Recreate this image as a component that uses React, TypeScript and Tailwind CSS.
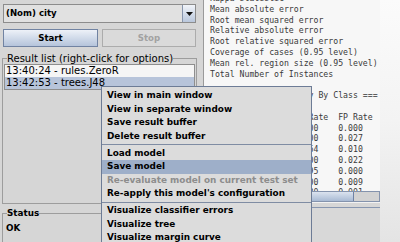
const output = [
  "Kappa statistic".padEnd(41) + "0.9544",
  "Mean absolute error".padEnd(41) + "0.0123",
  "Root mean squared error".padEnd(41) + "0.0861",
  "Relative absolute error".padEnd(41) + "5.5912 %",
  "Root relative squared error".padEnd(41) + "25.4501 %",
  "Coverage of cases (0.95 level)".padEnd(41) + "98.2143 %",
  "Mean rel. region size (0.95 level)".padEnd(41) + "10.8036 %",
  "Total Number of Instances".padEnd(41) + "168",
  "",
  "=== Detailed Accuracy By Class ===",
  "",
  "                 TP Rate  FP Rate  Precision  Recall   F-Measure",
  "                 1.000    0.000    1.000      1.000    1.000",
  "                 0.900    0.027    0.900      0.900    0.900",
  "                 0.864    0.010    0.950      0.864    0.905",
  "                 0.900    0.022    0.818      0.900    0.857",
  "                 0.895    0.000    1.000      0.895    0.944",
  "                 1.000    0.009    0.960      1.000    0.980",
  "                 0.880    0.001    0.990      0.880    0.932",
];

const menuItems: (string | { label: string; disabled?: boolean; active?: boolean } | null)[] = [
  "View in main window",
  "View in separate window",
  "Save result buffer",
  "Delete result buffer",
  null,
  "Load model",
  { label: "Save model", active: true },
  { label: "Re-evaluate model on current test set", disabled: true },
  "Re-apply this model's configuration",
  null,
  "Visualize classifier errors",
  "Visualize tree",
  "Visualize margin curve",
  "Visualize threshold curve",
];

export default function App() {
  return (
    <div className="relative flex h-[242px] w-[400px] overflow-hidden bg-[#d6d6d6] [font-family:'DejaVu_Sans',sans-serif] text-black">
      {/* left side: class combo, start/stop, result list, status */}
      <div className="flex w-[200px] shrink-0 flex-col pt-[4px] pl-[3px] pr-[4px]">
        <div className="flex h-[19px] shrink-0 border border-[#8c8c8c] bg-[#e1e1e1]">
          <span className="flex-1 pl-[2px] text-[8.6px] font-bold leading-[17px]">(Nom) city</span>
          <span className="flex w-[13px] items-center justify-center border-l border-[#8795ad] bg-linear-to-b from-[#f1f4f9] to-[#b9c7dc]">
            <svg width="7" height="4" viewBox="0 0 7 4">
              <path d="M0 0h7L3.5 4z" fill="#111" />
            </svg>
          </span>
        </div>

        <div className="mt-[6px] flex shrink-0 gap-[4px]">
          <button className="h-[18px] w-[95px] border border-[#7183a2] bg-linear-to-b from-[#edf1f8] to-[#b5c4db] text-[8.6px] font-bold">
            Start
          </button>
          <button className="h-[18px] flex-1 border border-[#acacac] bg-[#dadada] text-[8.6px] font-bold text-[#a2a2a2]">
            Stop
          </button>
        </div>

        <fieldset className="mt-[6px] -mx-[1px] h-[151px] shrink-0 border border-[#9d9d9d] px-[1px] pb-[1px]">
          <legend className="ml-[3px] text-[10px] leading-[11px]">Result list (right-click for options)</legend>
          <div className="h-full border border-[#8e8e8e] bg-[#f5f5f5] text-[10px]">
            <div className="h-[12px] pl-[1px] leading-[12px]">13:40:24 - rules.ZeroR</div>
            <div className="h-[12px] bg-[#b7c4da] pl-[1px] leading-[12px]">13:42:53 - trees.J48</div>
          </div>
        </fieldset>

        <fieldset className="mt-[3px] -mx-[1px] -mr-[5px] h-[40px] shrink-0 border border-[#9d9d9d] pl-[3px]">
          <legend className="ml-[1px] text-[8.8px] font-bold leading-[12px]">Status</legend>
          <div className="pt-[4px] text-[8.8px] font-bold leading-[10px]">OK</div>
        </fieldset>
      </div>

      {/* right side: classifier output */}
      <div className="flex w-[180px] shrink-0 flex-col">
        <div className="h-[191px] shrink-0 pl-[3px]">
          <div className="h-full overflow-hidden border-l border-[#9a9a9a] bg-[#f7f7f7] pl-[6px] [font-family:'DejaVu_Sans_Mono',monospace] text-[8.2px] leading-[10.8px] text-[#3a3a3a]">
            <div className="-mt-[7px] whitespace-pre">
              {output.map((line, i) => (
                <div key={i} className="h-[10.8px]">
                  {line}
                </div>
              ))}
            </div>
          </div>
        </div>
        <div className="ml-[3px] flex h-[11px] shrink-0 border border-[#8493ad] bg-[#d2d2d2]">
          <div className="w-[150px] border-r border-[#6f82a4] bg-linear-to-b from-[#dbe3ef] to-[#a9bad4]" />
        </div>
        <div className="flex-1 border-t border-[#f2f2f2] pt-[4px]">
          <div className="h-full border-t border-[#8796b0] bg-[#d8d8d8]" />
        </div>
      </div>

      <div className="flex-1 bg-linear-to-b from-[#fbfbfb] via-[#f3f3f3] to-[#e4e4e4]" />

      {/* popup menu on the selected result */}
      <div className="absolute left-[101px] top-[86px] w-[211px] border border-[#6d7c96] bg-[#dcdcdc] pt-[2px] text-[8.9px] font-bold">
        {menuItems.map((item, i) => {
          if (item === null) {
            return (
              <div key={i} className="flex h-[3.5px] items-center">
                <div className="h-[1px] w-full bg-[#7f8ca3]" />
              </div>
            );
          }
          const it = typeof item === "string" ? { label: item } : item;
          return (
            <div
              key={i}
              className={
                "h-[13.5px] whitespace-nowrap pl-[5px] leading-[13.5px] " +
                (it.active ? "bg-[#9eafc9] " : "") +
                (it.disabled ? "text-[#8d8d8d]" : "text-black")
              }
            >
              {it.label}
            </div>
          );
        })}
      </div>
    </div>
  );
}
